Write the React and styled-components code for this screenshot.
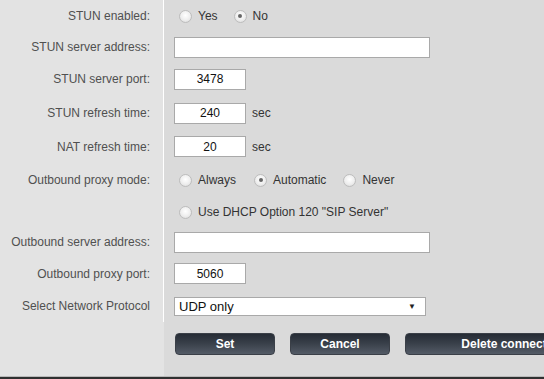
import React from "react"
import styled, { createGlobalStyle } from "styled-components"

const GlobalStyle = createGlobalStyle`
  html, body {
    margin: 0;
    padding: 0;
    background: #dadada;
    overflow: hidden;
  }
  body {
    font-family: "Liberation Sans", Arial, sans-serif;
    font-size: 12px;
  }
`

const Page = styled.div`
  width: 544px;
  height: 379px;
  display: flex;
  flex-direction: column;
  overflow: hidden;
`
const Form = styled.div`
  flex: 1;
  display: flex;
  flex-direction: column;
`
const Row = styled.div`
  display: flex;
  height: ${(p) => p.h}px;
`
const Label = styled.div`
  flex: none;
  width: 150px;
  padding-right: 13px;
  background: #e3e3e3;
  color: #505050;
  text-align: right;
  display: flex;
  align-items: center;
  justify-content: flex-end;
  border-right: 1px solid ${(p) => (p.$plain ? "#e3e3e3" : "#ffffff")};
  white-space: nowrap;
`
const Field = styled.div`
  flex: 1;
  display: flex;
  align-items: center;
  padding-left: 10px;
  color: #333;
  white-space: nowrap;
`
const TextInput = styled.div`
  box-sizing: border-box;
  width: ${(p) => p.w}px;
  height: 21px;
  background: #fff;
  border: 1px solid #a9a9a9;
  color: #111;
  display: flex;
  align-items: center;
  justify-content: center;
  font-size: 12px;
`
const Unit = styled.span`
  margin-left: 6px;
  color: #333;
`
const RadioGroup = styled.div`
  display: flex;
  align-items: center;
  padding-left: 5px;
`
const RadioItem = styled.label`
  display: flex;
  align-items: center;
  margin-right: ${(p) => p.gap}px;
  color: #333;
`
const RadioCircle = styled.span`
  box-sizing: border-box;
  width: 13px;
  height: 13px;
  border-radius: 50%;
  border: 1px solid #bdbdbd;
  background: radial-gradient(circle at 50% 40%, #ffffff 0%, #eeeeee 55%, #d6d6d6 100%);
  margin-right: 6px;
  display: flex;
  align-items: center;
  justify-content: center;
  &::after {
    content: "";
    width: 4px;
    height: 4px;
    border-radius: 50%;
    background: ${(p) => (p.checked ? "#666" : "transparent")};
  }
`
const Select = styled.div`
  box-sizing: border-box;
  width: 252px;
  height: 19px;
  background: #fff;
  border: 1px solid #a9a9a9;
  display: flex;
  align-items: center;
  justify-content: space-between;
  padding: 0 9px 0 4px;
  font-size: 13px;
  color: #111;
`
const Arrow = styled.span`
  font-size: 8px;
  color: #222;
`
const ButtonRow = styled.div`
  flex: 1;
  display: flex;
`
const Buttons = styled.div`
  flex: 1;
  display: flex;
  gap: 15px;
  padding: 11px 0 0 11px;
  min-width: 0;
`
const Button = styled.div`
  box-sizing: border-box;
  flex: none;
  width: ${(p) => p.w}px;
  height: 22px;
  border-radius: 4px;
  border: 1px solid #3a3f47;
  background: linear-gradient(#262c35, #3a414b 50%, #535b66);
  color: #fff;
  font-weight: bold;
  font-size: 12px;
  display: flex;
  align-items: center;
  justify-content: center;
`
const BottomBar = styled.div`
  height: 2px;
  border-top: 1px solid #b9b9b9;
  background: #2f3030;
`

const Radio = ({ label, checked, gap = 12 }) => (
  <RadioItem gap={gap}>
    <RadioCircle checked={checked} />
    {label}
  </RadioItem>
)

export default function App() {
  return (
    <Page>
      <GlobalStyle />
      <Form>
        <Row h={32}>
          <Label>STUN enabled:</Label>
          <Field>
            <RadioGroup>
              <Radio label="Yes" gap={16} />
              <Radio label="No" checked />
            </RadioGroup>
          </Field>
        </Row>
        <Row h={30}>
          <Label>STUN server address:</Label>
          <Field>
            <TextInput w={256} />
          </Field>
        </Row>
        <Row h={34}>
          <Label>STUN server port:</Label>
          <Field>
            <TextInput w={72}>3478</TextInput>
          </Field>
        </Row>
        <Row h={34}>
          <Label>STUN refresh time:</Label>
          <Field>
            <TextInput w={72}>240</TextInput>
            <Unit>sec</Unit>
          </Field>
        </Row>
        <Row h={33}>
          <Label>NAT refresh time:</Label>
          <Field>
            <TextInput w={72}>20</TextInput>
            <Unit>sec</Unit>
          </Field>
        </Row>
        <Row h={34}>
          <Label>Outbound proxy mode:</Label>
          <Field>
            <RadioGroup>
              <Radio label="Always" gap={18} />
              <Radio label="Automatic" checked gap={17} />
              <Radio label="Never" />
            </RadioGroup>
          </Field>
        </Row>
        <Row h={30}>
          <Label />
          <Field>
            <RadioGroup>
              <Radio label={'Use DHCP Option 120 "SIP Server"'} />
            </RadioGroup>
          </Field>
        </Row>
        <Row h={30}>
          <Label>Outbound server address:</Label>
          <Field>
            <TextInput w={256} />
          </Field>
        </Row>
        <Row h={33}>
          <Label>Outbound proxy port:</Label>
          <Field>
            <TextInput w={72}>5060</TextInput>
          </Field>
        </Row>
        <Row h={32}>
          <Label>Select Network Protocol</Label>
          <Field>
            <Select>
              UDP only
              <Arrow>▼</Arrow>
            </Select>
          </Field>
        </Row>
        <ButtonRow>
          <Label $plain />
          <Buttons>
            <Button w={100}>Set</Button>
            <Button w={100}>Cancel</Button>
            <Button w={216}>Delete connection</Button>
          </Buttons>
        </ButtonRow>
      </Form>
      <BottomBar />
    </Page>
  )
}
